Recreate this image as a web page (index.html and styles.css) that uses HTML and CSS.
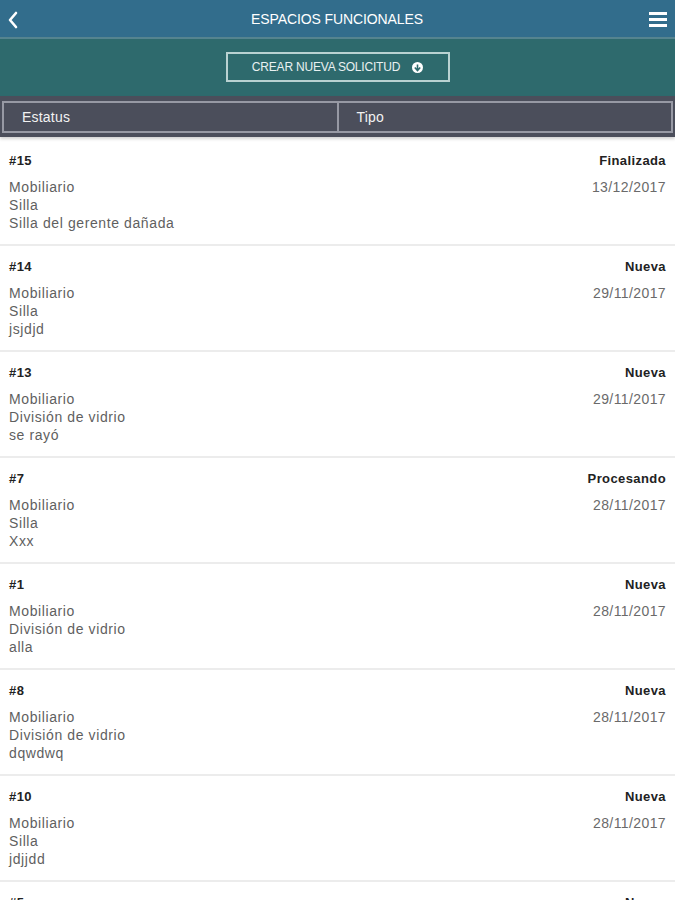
FILE: index.html
```html
<!DOCTYPE html>
<html lang="es">
<head>
<meta charset="utf-8">
<title>Espacios funcionales</title>
<link rel="stylesheet" href="styles.css">
</head>
<body>
<header class="topbar">
  <svg class="back" width="12" height="18" viewBox="0 0 12 18"><path d="M9 2 L3 9 L9 16" fill="none" stroke="#fff" stroke-width="2.6" stroke-linecap="round" stroke-linejoin="round"/></svg>
  <h1 class="title">ESPACIOS FUNCIONALES</h1>
  <svg class="menu" width="18" height="15" viewBox="0 0 18 15"><rect x="0" y="0" width="18" height="3" fill="#fff"/><rect x="0" y="6" width="18" height="3" fill="#fff"/><rect x="0" y="12" width="18" height="3" fill="#fff"/></svg>
</header>
<section class="actionbar">
  <button class="newbtn">CREAR NUEVA SOLICITUD
    <svg width="11" height="11" viewBox="0 0 11 11"><circle cx="5.5" cy="5.5" r="5.5" fill="#fff"/><path d="M5.5 2.5 V8.5 M2.8 5.5 L5.5 8.5 L8.2 5.5" fill="none" stroke="#2e6a6d" stroke-width="1.6"/></svg>
  </button>
</section>
<nav class="filters">
  <div class="filter">Estatus</div>
  <div class="filter">Tipo</div>
</nav>
<main class="list">
  <div class="row"><div class="left"><div class="id">#15</div><div class="lines">Mobiliario<br>Silla<br>Silla del gerente dañada</div></div><div class="right"><div class="status">Finalizada</div><div class="date">13/12/2017</div></div></div>
  <div class="row"><div class="left"><div class="id">#14</div><div class="lines">Mobiliario<br>Silla<br>jsjdjd</div></div><div class="right"><div class="status">Nueva</div><div class="date">29/11/2017</div></div></div>
  <div class="row"><div class="left"><div class="id">#13</div><div class="lines">Mobiliario<br>División de vidrio<br>se rayó</div></div><div class="right"><div class="status">Nueva</div><div class="date">29/11/2017</div></div></div>
  <div class="row"><div class="left"><div class="id">#7</div><div class="lines">Mobiliario<br>Silla<br>Xxx</div></div><div class="right"><div class="status">Procesando</div><div class="date">28/11/2017</div></div></div>
  <div class="row"><div class="left"><div class="id">#1</div><div class="lines">Mobiliario<br>División de vidrio<br>alla</div></div><div class="right"><div class="status">Nueva</div><div class="date">28/11/2017</div></div></div>
  <div class="row"><div class="left"><div class="id">#8</div><div class="lines">Mobiliario<br>División de vidrio<br>dqwdwq</div></div><div class="right"><div class="status">Nueva</div><div class="date">28/11/2017</div></div></div>
  <div class="row"><div class="left"><div class="id">#10</div><div class="lines">Mobiliario<br>Silla<br>jdjjdd</div></div><div class="right"><div class="status">Nueva</div><div class="date">28/11/2017</div></div></div>
  <div class="row"><div class="left"><div class="id">#5</div><div class="lines">Mobiliario<br>Silla<br>asd</div></div><div class="right"><div class="status">Nueva</div><div class="date">28/11/2017</div></div></div>
</main>
</body>
</html>
```
FILE: styles.css
```css
* { box-sizing: border-box; }
html, body { margin: 0; padding: 0; }
body {
  width: 675px;
  height: 900px;
  overflow: hidden;
  background: #fff;
  font-family: "Liberation Sans", Arial, sans-serif;
}
.topbar {
  height: 39px;
  background: #326d8c;
  border-bottom: 2px solid #55848f;
  display: flex;
  align-items: center;
  justify-content: space-between;
  padding: 0 8px 0 7px;
}
.back { display: block; margin-top: 2px; }
.menu { display: block; margin-top: 1px; }
.title {
  margin: 0;
  font-size: 14px;
  font-weight: normal;
  color: #fff;
  letter-spacing: -0.1px;
  padding-left: 6px;
}
.actionbar {
  height: 57px;
  background: #2e6a6d;
  display: flex;
  justify-content: center;
  padding-top: 13px;
}
.newbtn {
  width: 224px;
  height: 30px;
  border: 2px solid #b9d2d2;
  background: transparent;
  color: #e9f1f1;
  font-family: "Liberation Sans", Arial, sans-serif;
  font-size: 12px;
  letter-spacing: -0.2px;
  display: flex;
  align-items: center;
  justify-content: center;
  gap: 12px;
  padding: 0;
}
.newbtn svg { display: block; }
.filters {
  height: 41px;
  background: #4b4e5b;
  display: flex;
  padding: 5px 2px 4px 2px;
  box-shadow: 0 2px 3px rgba(0,0,0,0.18);
}
.filter {
  flex: 1;
  border: 2px solid #9799a4;
  color: #f2f2f2;
  font-size: 14px;
  letter-spacing: 0.2px;
  display: flex;
  align-items: center;
  padding-left: 18px;
}
.filter + .filter { border-left: none; }
.list { padding-top: 3px; }
.row {
  height: 106px;
  display: flex;
  justify-content: space-between;
  padding: 12px 9px 0 9px;
  border-bottom: 2px solid #ececec;
}
.id, .status {
  font-size: 13px;
  font-weight: bold;
  color: #222;
  line-height: 18px;
  letter-spacing: 0.4px;
}
.lines, .date {
  margin-top: 8px;
  font-size: 14px;
  line-height: 18px;
  color: #5f5f5f;
  letter-spacing: 0.6px;
}
.right { text-align: right; }
.date { color: #6a6a6a; letter-spacing: 0.4px; }
```
